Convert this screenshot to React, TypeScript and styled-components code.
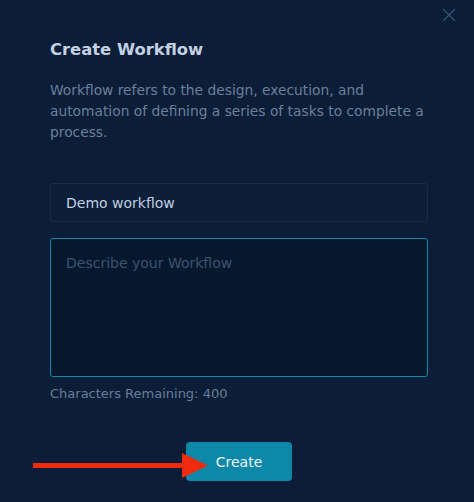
import styled, { createGlobalStyle } from "styled-components";

const GlobalStyle = createGlobalStyle`
  html, body {
    margin: 0;
    padding: 0;
    background: #0b1d37;
  }
  * {
    box-sizing: border-box;
  }
`;

const Modal = styled.div`
  position: relative;
  width: 474px;
  height: 502px;
  background: #0b1d37;
  padding: 36px 46px 0 50px;
  font-family: "DejaVu Sans", "Open Sans", sans-serif;
  display: flex;
  flex-direction: column;
`;

const CloseButton = styled.button`
  position: absolute;
  top: 8px;
  right: 18px;
  width: 14px;
  height: 14px;
  padding: 0;
  border: none;
  background: transparent;
  cursor: pointer;
  display: flex;
  align-items: center;
  justify-content: center;
`;

const Title = styled.h2`
  margin: 0;
  font-size: 16.4px;
  font-weight: 600;
  line-height: 28px;
  color: #c3d1e2;
`;

const Description = styled.p`
  margin: 16px 0 0;
  font-size: 13.8px;
  line-height: 21px;
  color: #6c809c;
`;

const NameInput = styled.input`
  margin-top: 40px;
  height: 39px;
  width: 100%;
  padding: 0 15px;
  border: 1px solid #1a2c45;
  border-radius: 3px;
  background: #0c1e38;
  color: #c1cfe0;
  font-family: inherit;
  font-size: 14px;
  outline: none;
`;

const DescriptionArea = styled.textarea`
  margin-top: 16px;
  height: 139px;
  width: 100%;
  padding: 15px 15px;
  border: 1px solid #1686a8;
  border-radius: 3px;
  background: #06182d;
  color: #c1cfe0;
  caret-color: #c1cfe0;
  font-family: inherit;
  font-size: 14px;
  line-height: 18px;
  resize: none;
  outline: none;
  &::placeholder {
    color: #3c536f;
  }
`;

const Counter = styled.div`
  margin-top: 8px;
  font-size: 13px;
  line-height: 18px;
  color: #687d98;
`;

const Footer = styled.div`
  display: flex;
  justify-content: center;
  margin-top: 39px;
`;

const CreateButton = styled.button`
  position: relative;
  width: 106px;
  height: 39px;
  border: none;
  border-radius: 4px;
  background: #0e88a8;
  color: #eef6fa;
  font-family: inherit;
  font-size: 14px;
  font-weight: 500;
  cursor: pointer;
`;

// red pointer drawn over the footer
const Pointer = styled.svg`
  position: absolute;
  left: 32px;
  top: 452px;
  pointer-events: none;
`;

const App = () => {
  return (
    <>
      <GlobalStyle />
      <Modal>
        <CloseButton aria-label="Close">
          <svg width="14" height="14" viewBox="0 0 14 14">
            <path d="M1 1 L13 13 M13 1 L1 13" stroke="#3a5270" strokeWidth="1.3" />
          </svg>
        </CloseButton>
        <Title>Create Workflow</Title>
        <Description>
          Workflow refers to the design, execution, and automation of defining a
          series of tasks to complete a process.
        </Description>
        <NameInput defaultValue="Demo workflow" />
        <DescriptionArea placeholder="Describe your Workflow" autoFocus />
        <Counter>Characters Remaining: 400</Counter>
        <Footer>
          <CreateButton>Create</CreateButton>
        </Footer>
        <Pointer width="180" height="28" viewBox="0 0 180 28">
          <rect x="1" y="11" width="152" height="5" fill="#f02a0c" />
          <polygon points="150,1 176,13.5 150,26" fill="#f02a0c" />
        </Pointer>
      </Modal>
    </>
  );
};

export default App;
